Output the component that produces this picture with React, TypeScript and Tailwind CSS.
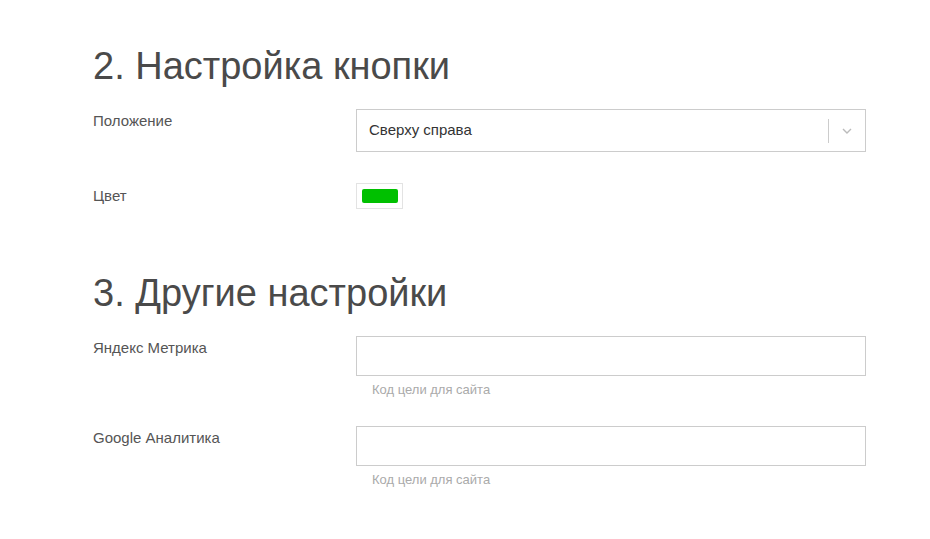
export default function App() {
  return (
    <div className="min-h-[539px] bg-white pl-[93px] pt-[42px] text-[#555]" style={{ fontFamily: '"Liberation Sans", Arial, sans-serif' }}>
      <h2 className="text-[38px] leading-[48px] text-[#4a4a4a]">2. Настройка кнопки</h2>
      <div className="mt-[19px] flex">
        <div className="w-[263px] pt-[2px] text-[15px] leading-[20px]">Положение</div>
        <div className="flex h-[43px] w-[510px] items-center border border-[#ccc] pl-[12px] text-[15px] text-[#333]">
          <span className="flex-1">Сверху справа</span>
          <span className="h-[24px] w-px bg-[#ccc]" />
          <svg className="mx-[12px]" width="12" height="12" viewBox="0 0 12 12" fill="none" stroke="#bbb" strokeWidth="1.4"><path d="M2 4l4 4 4-4" /></svg>
        </div>
      </div>
      <div className="mt-[31px] flex items-center">
        <div className="w-[263px] text-[15px] leading-[20px]">Цвет</div>
        <div className="flex h-[26px] w-[47px] items-center justify-center border border-[#e3e3e3]">
          <div className="h-[14px] w-[36px] rounded-[2px] bg-[#00c000]" />
        </div>
      </div>
      <h2 className="mt-[60px] text-[38px] leading-[48px] text-[#4a4a4a]">3. Другие настройки</h2>
      <div className="mt-[19px] flex">
        <div className="w-[263px] pt-[2px] text-[15px] leading-[20px]">Яндекс Метрика</div>
        <div>
          <div className="h-[40px] w-[510px] border border-[#ccc]" />
          <div className="mt-[4px] pl-[16px] text-[13px] text-[#aaa]">Код цели для сайта</div>
        </div>
      </div>
      <div className="mt-[26px] flex">
        <div className="w-[263px] pt-[2px] text-[15px] leading-[20px]">Google Аналитика</div>
        <div>
          <div className="h-[40px] w-[510px] border border-[#ccc]" />
          <div className="mt-[4px] pl-[16px] text-[13px] text-[#aaa]">Код цели для сайта</div>
        </div>
      </div>
    </div>
  );
}
